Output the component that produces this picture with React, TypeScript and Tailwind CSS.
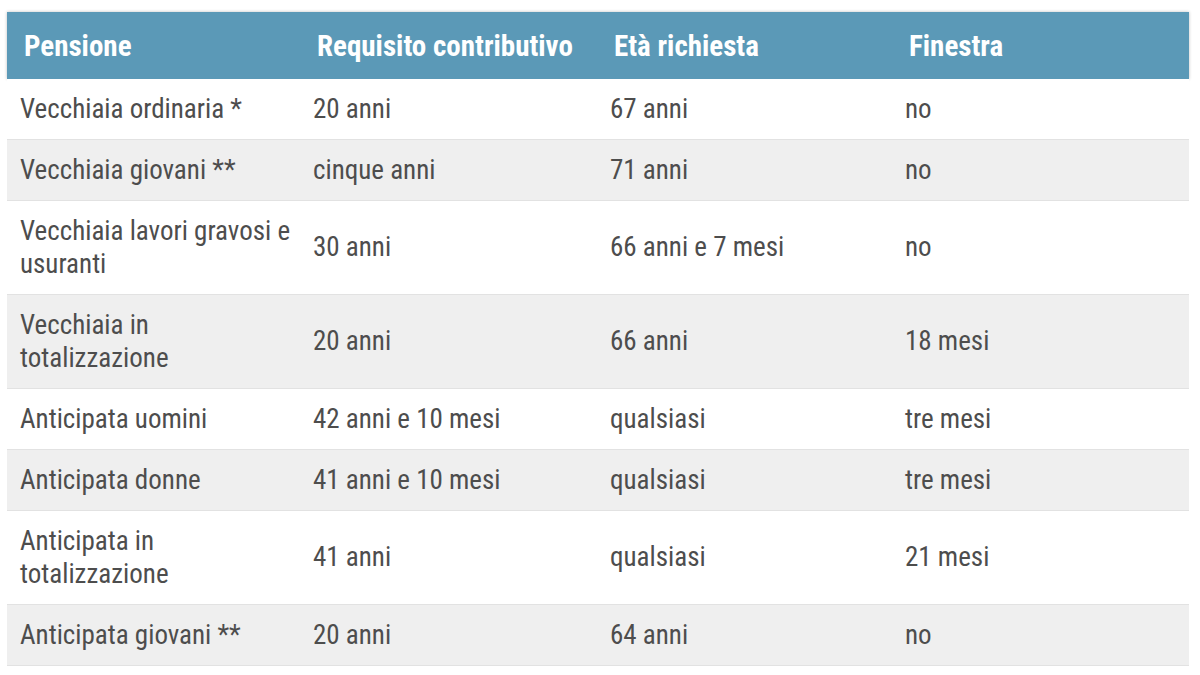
const ROWS: [string, string, string, string][] = [
  ['Vecchiaia ordinaria *', '20 anni', '67 anni', 'no'],
  ['Vecchiaia giovani **', 'cinque anni', '71 anni', 'no'],
  ['Vecchiaia lavori gravosi e usuranti', '30 anni', '66 anni e 7 mesi', 'no'],
  ['Vecchiaia in totalizzazione', '20 anni', '66 anni', '18 mesi'],
  ['Anticipata uomini', '42 anni e 10 mesi', 'qualsiasi', 'tre mesi'],
  ['Anticipata donne', '41 anni e 10 mesi', 'qualsiasi', 'tre mesi'],
  ['Anticipata in totalizzazione', '41 anni', 'qualsiasi', '21 mesi'],
  ['Anticipata giovani **', '20 anni', '64 anni', 'no'],
];

const HEADERS = ['Pensione', 'Requisito contributivo', 'Età richiesta', 'Finestra'];

export default function App() {
  return (
    <div className="w-[1200px] h-[675px] bg-white pt-[12px] pl-[7px] pr-[11px] font-['Roboto_Condensed','Liberation_Sans_Narrow','DejaVu_Sans_Condensed',Roboto,sans-serif]">
      <table className="w-full table-fixed border-collapse">
        <colgroup>
          <col className="w-[293px]" />
          <col className="w-[297px]" />
          <col className="w-[295px]" />
          <col />
        </colgroup>
        <thead>
          <tr className="bg-[#5b99b7] h-[67px] shadow-[0_0_3px_rgba(0,0,0,0.25)]">
            {HEADERS.map((h) => (
              <th key={h} className="text-left align-middle pl-[17px] pt-[2px] text-white font-bold text-[29px] leading-[33px]">
                {h}
              </th>
            ))}
          </tr>
        </thead>
        <tbody>
          {ROWS.map((row, i) => (
            <tr key={i} className={`border-b border-[#e2e2e2] ${i % 2 === 1 ? 'bg-[#efefef]' : 'bg-white'}`}>
              {row.map((cell, j) => (
                <td key={j} className={`align-middle py-[13.5px] pl-[13px] ${j === 0 ? 'pr-[8px]' : ''} text-[27px] leading-[33px] text-[#4d4d4d]`}>
                  {cell}
                </td>
              ))}
            </tr>
          ))}
        </tbody>
      </table>
    </div>
  );
}
